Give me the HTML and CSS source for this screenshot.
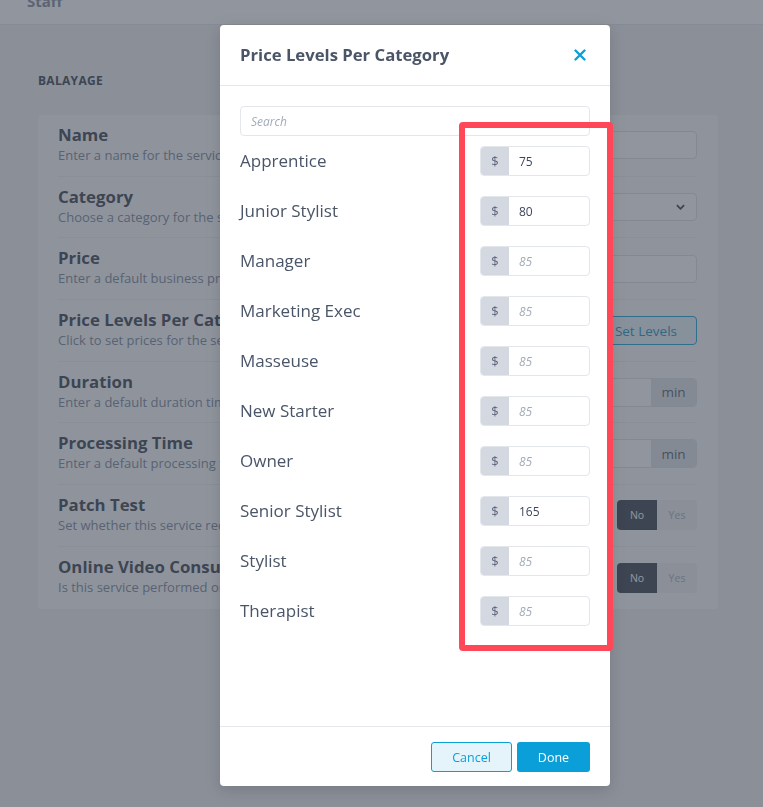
FILE: index.html
```html
<!DOCTYPE html>
<html>
<head>
<meta charset="utf-8">
<link rel="stylesheet" href="styles.css">
</head>
<body>
<header class="topbar"><span class="topbar-title">Staff</span></header>
<main class="page">
  <h2 class="section-title">BALAYAGE</h2>
  <div class="card">
    <div class="row">
      <div class="row-text"><div class="row-title">Name</div><div class="row-desc">Enter a name for the service</div></div>
      <div class="control"><div class="field"></div></div>
    </div>
    <div class="row">
      <div class="row-text"><div class="row-title">Category</div><div class="row-desc">Choose a category for the service</div></div>
      <div class="control"><div class="field select"><svg class="chev" viewBox="0 0 10 6" width="9" height="6"><path d="M1 1l4 4 4-4" fill="none" stroke="#2d3748" stroke-width="2"/></svg></div></div>
    </div>
    <div class="row">
      <div class="row-text"><div class="row-title">Price</div><div class="row-desc">Enter a default business price</div></div>
      <div class="control"><div class="field"></div></div>
    </div>
    <div class="row">
      <div class="row-text"><div class="row-title">Price Levels Per Category</div><div class="row-desc">Click to set prices for the service</div></div>
      <div class="control"><div class="btn-outline">Set Levels</div></div>
    </div>
    <div class="row">
      <div class="row-text"><div class="row-title">Duration</div><div class="row-desc">Enter a default duration time</div></div>
      <div class="control"><div class="field addon-field"><span class="addon-r">min</span></div></div>
    </div>
    <div class="row">
      <div class="row-text"><div class="row-title">Processing Time</div><div class="row-desc">Enter a default processing time</div></div>
      <div class="control"><div class="field addon-field"><span class="addon-r">min</span></div></div>
    </div>
    <div class="row">
      <div class="row-text"><div class="row-title">Patch Test</div><div class="row-desc">Set whether this service requires a patch test</div></div>
      <div class="control"><div class="toggle"><span class="tg on">No</span><span class="tg">Yes</span></div></div>
    </div>
    <div class="row">
      <div class="row-text"><div class="row-title">Online Video Consultation</div><div class="row-desc">Is this service performed online</div></div>
      <div class="control"><div class="toggle"><span class="tg on">No</span><span class="tg">Yes</span></div></div>
    </div>
  </div>
</main>

<div class="overlay"></div>

<div class="modal">
  <div class="modal-head">
    <h3 class="modal-title">Price Levels Per Category</h3>
    <svg class="close" viewBox="0 0 12 12" width="12" height="12"><path d="M1.5 1.5l9 9M10.5 1.5l-9 9" stroke="#0a9fd8" stroke-width="2.4" stroke-linecap="round"/></svg>
  </div>
  <div class="modal-body">
    <div class="search">Search</div>
    <div class="levels">
      <div class="level"><span class="level-name">Apprentice</span><div class="ig"><span class="cur">$</span><span class="val">75</span></div></div>
      <div class="level"><span class="level-name">Junior Stylist</span><div class="ig"><span class="cur">$</span><span class="val">80</span></div></div>
      <div class="level"><span class="level-name">Manager</span><div class="ig"><span class="cur">$</span><span class="val ph">85</span></div></div>
      <div class="level"><span class="level-name">Marketing Exec</span><div class="ig"><span class="cur">$</span><span class="val ph">85</span></div></div>
      <div class="level"><span class="level-name">Masseuse</span><div class="ig"><span class="cur">$</span><span class="val ph">85</span></div></div>
      <div class="level"><span class="level-name">New Starter</span><div class="ig"><span class="cur">$</span><span class="val ph">85</span></div></div>
      <div class="level"><span class="level-name">Owner</span><div class="ig"><span class="cur">$</span><span class="val ph">85</span></div></div>
      <div class="level"><span class="level-name">Senior Stylist</span><div class="ig"><span class="cur">$</span><span class="val">165</span></div></div>
      <div class="level"><span class="level-name">Stylist</span><div class="ig"><span class="cur">$</span><span class="val ph">85</span></div></div>
      <div class="level"><span class="level-name">Therapist</span><div class="ig"><span class="cur">$</span><span class="val ph">85</span></div></div>
    </div>
  </div>
  <div class="modal-foot">
    <span class="btn btn-cancel">Cancel</span>
    <span class="btn btn-done">Done</span>
  </div>
</div>

<div class="highlight"></div>
</body>
</html>
```
FILE: styles.css
```css
* { box-sizing: border-box; }
html, body { margin: 0; height: 100%; }
body {
  font-family: "Open Sans", "DejaVu Sans", sans-serif;
  background: #eef0f3;
  color: #2d3748;
  overflow: hidden;
}
.topbar {
  height: 25px;
  background: #ffffff;
  border-bottom: 1px solid #e2e6eb;
  padding-left: 27px;
  overflow: hidden;
}
.topbar-title {
  display: block;
  margin-top: -9px;
  font-size: 15px;
  font-weight: 700;
  color: #7a8599;
  line-height: 20px;
}
.page { padding: 0 45px 0 38px; }
.section-title {
  margin: 48px 0 0;
  font-size: 12px;
  font-weight: 700;
  letter-spacing: 0.3px;
  line-height: 16px;
  color: #2d3748;
}
.card {
  margin-top: 26px;
  background: #fbfcfd;
  border-radius: 4px;
  padding: 0 21px 0 20px;
}
.row {
  display: flex;
  align-items: center;
  justify-content: space-between;
  height: 61.7px;
  border-bottom: 1px solid #eceef2;
}
.row:last-child { border-bottom: 0; }
.row-text { white-space: nowrap; overflow: hidden; flex: 1; margin-top: -3px; }
.row-title { font-size: 16.8px; font-weight: 700; line-height: 21px; color: #2d3748; }
.row-desc { font-size: 13px; line-height: 18px; color: #718096; margin-top: 1px; }
.control { width: 260px; flex: none; display: flex; justify-content: flex-end; }
.field {
  width: 260px; height: 28px;
  border: 1px solid #dde1e7; border-radius: 4px; background: #fff;
  display: flex; align-items: center; justify-content: flex-end;
}
.select { padding-right: 11px; }
.addon-field { height: 29px; overflow: hidden; }
.addon-r {
  width: 45px; height: 100%;
  background: #dfe3e9; color: #4a5568;
  font-size: 13.5px; display: flex; align-items: center; justify-content: center;
}
.btn-outline {
  width: 100px; height: 29px;
  border: 1px solid #0a9fd8; border-radius: 4px; background: #e6f4fb;
  color: #0a8cc0; font-size: 13.5px;
  display: flex; align-items: center; justify-content: flex-end; padding-right: 19px;
  margin-top: 1px;
}
.toggle { display: flex; height: 30px; border-radius: 4px; overflow: hidden; }
.tg {
  width: 40px; display: flex; align-items: center; justify-content: center;
  font-size: 10.5px; background: #edf0f3; color: #a0aab8;
}
.tg.on { background: #2d3748; color: #ffffff; }

.overlay {
  position: fixed; inset: 0;
  background: rgba(72, 78, 92, 0.6);
}

.modal {
  position: fixed; left: 220px; top: 25px;
  width: 390px; height: 761px;
  background: #fff; border-radius: 4px;
  display: flex; flex-direction: column;
  box-shadow: 0 4px 16px rgba(0,0,0,0.15);
}
.modal-head {
  height: 61px; flex: none;
  display: flex; align-items: center; justify-content: space-between;
  padding: 0 24px 0 20px;
  border-bottom: 1px solid #e5e7eb;
}
.modal-title { margin: 0 0 2px; font-size: 16.7px; font-weight: 700; color: #4a5568; }
.modal-body { flex: 1; padding: 20px 20px 0; }
.search {
  height: 30px; border: 1px solid #e3e6eb; border-radius: 4px;
  padding-left: 10px; display: flex; align-items: center;
  font-size: 12px; font-style: italic; color: #a3abb9;
}
.levels { margin-top: 10px; display: flex; flex-direction: column; gap: 20px; }
.level { display: flex; align-items: center; justify-content: space-between; height: 30px; }
.level-name { font-size: 17px; color: #4a5568; margin-top: -1px; }
.ig {
  width: 110px; height: 30px; display: flex;
  border: 1px solid #e3e6eb; border-radius: 4px; overflow: hidden;
}
.cur {
  width: 28px; background: #d4d8e0; color: #5a6478; font-size: 13px;
  display: flex; align-items: center; justify-content: center;
}
.val { padding-left: 10px; display: flex; align-items: center; font-size: 12px; color: #3d4659; }
.val.ph { font-style: italic; color: #a3abb9; }
.modal-foot {
  height: 60px; flex: none;
  border-top: 1px solid #e5e7eb;
  display: flex; justify-content: flex-end; align-items: flex-start;
  padding: 15px 20px 0; gap: 5px;
}
.btn {
  height: 30px; border-radius: 3px; font-size: 12.5px;
  display: flex; align-items: center; justify-content: center;
}
.btn-cancel { width: 81px; background: #e5f3fa; border: 1px solid #0a9fd8; color: #0a9fd8; }
.btn-done { width: 73px; background: #0a9fd8; color: #fff; }

.highlight {
  position: fixed; left: 459px; top: 122px;
  width: 154px; height: 529px;
  border: 6px solid #ff4757; border-radius: 4px;
}
```
